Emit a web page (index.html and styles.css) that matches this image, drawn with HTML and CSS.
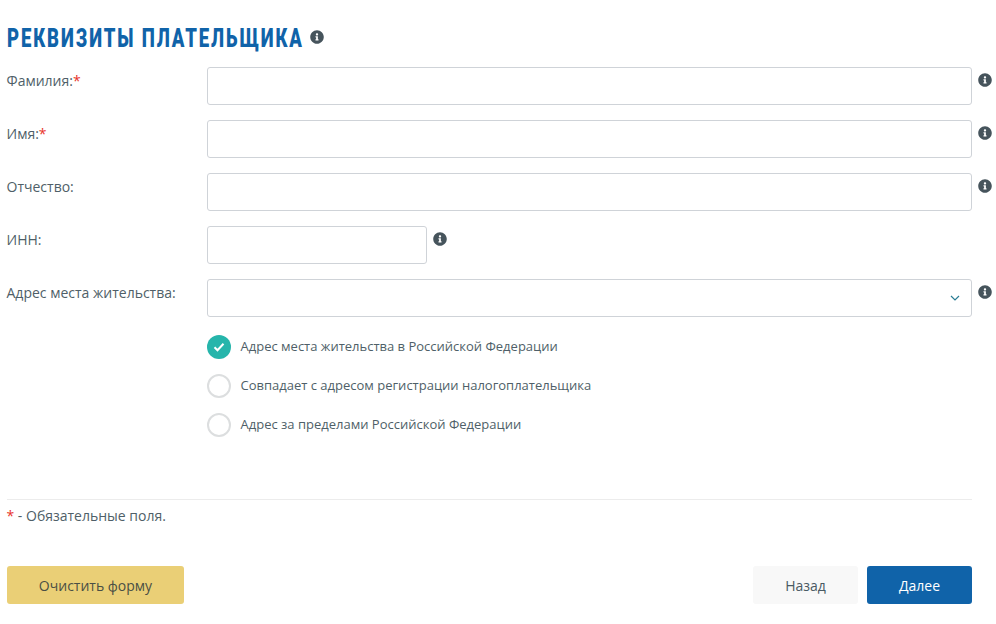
FILE: index.html
```html
<!DOCTYPE html>
<html lang="ru">

<head>
    <meta charset="UTF-8">
    <title>Реквизиты плательщика</title>
    <link rel="stylesheet" href="styles.css">
</head>

<body>
    <svg class="sprite" xmlns="http://www.w3.org/2000/svg">
        <symbol id="info" viewBox="0 0 512 512">
            <path d="M256 8C119.043 8 8 119.083 8 256c0 136.997 111.043 248 248 248s248-111.003 248-248C504 119.083 392.957 8 256 8zm0 110c23.196 0 42 18.804 42 42s-18.804 42-42 42-42-18.804-42-42 18.804-42 42-42zm56 254c0 6.627-5.373 12-12 12h-88c-6.627 0-12-5.373-12-12v-24c0-6.627 5.373-12 12-12h12v-64h-12c-6.627 0-12-5.373-12-12v-24c0-6.627 5.373-12 12-12h64c6.627 0 12 5.373 12 12v100h12c6.627 0 12 5.373 12 12v24z"/>
        </symbol>
    </svg>

    <main class="page">
        <h2 class="title"><span class="title-box"><span class="title-text">Реквизиты плательщика</span></span>
            <svg class="info"><use href="#info"></use></svg>
        </h2>

        <form class="form">
            <div class="row">
                <label class="label" for="lastName">Фамилия:<span class="req">*</span></label>
                <input class="field" type="text" id="lastName">
                <svg class="info"><use href="#info"></use></svg>
            </div>
            <div class="row">
                <label class="label" for="firstName">Имя:<span class="req">*</span></label>
                <input class="field" type="text" id="firstName">
                <svg class="info"><use href="#info"></use></svg>
            </div>
            <div class="row">
                <label class="label" for="middleName">Отчество:</label>
                <input class="field" type="text" id="middleName">
                <svg class="info"><use href="#info"></use></svg>
            </div>
            <div class="row">
                <label class="label" for="inn">ИНН:</label>
                <input class="field field-short" type="text" id="inn">
                <svg class="info"><use href="#info"></use></svg>
            </div>
            <div class="row">
                <label class="label">Адрес места жительства:</label>
                <div class="field select">
                    <svg class="chevron" viewBox="0 0 10 6"><path d="M1 1l4 4 4-4"/></svg>
                </div>
                <svg class="info"><use href="#info"></use></svg>
            </div>

            <div class="options">
                <div class="option">
                    <span class="radio radio-on">
                        <svg viewBox="0 0 12 10"><path d="M1.5 5.2l3 3 6-6.4"/></svg>
                    </span>
                    Адрес места жительства в Российской Федерации
                </div>
                <div class="option"><span class="radio"></span>Совпадает с адресом регистрации налогоплательщика</div>
                <div class="option"><span class="radio"></span>Адрес за пределами Российской Федерации</div>
            </div>
        </form>

        <p class="note"><span class="req">*</span> - Обязательные поля.</p>

        <div class="actions">
            <button type="button" class="btn btn-clear">Очистить форму</button>
            <div class="actions-right">
                <button type="button" class="btn btn-back">Назад</button>
                <button type="button" class="btn btn-next">Далее</button>
            </div>
        </div>
    </main>
</body>

</html>
```

FILE: styles.css
```css
* {
    margin: 0;
    padding: 0;
    box-sizing: border-box;
}

body {
    background: #fff;
    color: #4f5f68;
    font-family: 'Open Sans', sans-serif;
    font-size: 14px;
    line-height: 20px;
}

.sprite {
    display: none;
}

.page {
    width: 972px;
    padding: 23px 0 0 7px;
}

.title {
    display: flex;
    align-items: center;
    gap: 7px;
    height: 28px;
    margin-bottom: 16px;
}

/* no condensed face installed, so the heading is squeezed by hand */
.title-box {
    flex: none;
    width: 296px;
    height: 28px;
    padding-top: 2px;
    white-space: nowrap;
}

.title-text {
    display: inline-block;
    font-family: 'Roboto', sans-serif;
    font-size: 25px;
    line-height: 28px;
    font-weight: 900;
    letter-spacing: 2.57px;
    text-transform: uppercase;
    color: #1063a9;
    transform: scaleX(0.74);
    transform-origin: left center;
}

.info {
    flex: none;
    width: 14px;
    height: 14px;
    fill: #46545c;
}

.row {
    position: relative;
    display: flex;
    height: 38px;
    margin-bottom: 15px;
}

.label {
    flex: none;
    width: 200.5px;
    margin-left: -0.5px;
    padding-top: 4px;
}

.req {
    color: #e8342a;
}

.field {
    flex: 1;
    height: 38px;
    border: 1px solid #cfd3d8;
    border-radius: 3px;
    background: #fff;
}

.field-short {
    flex: none;
    width: 220px;
}

.select {
    display: flex;
    align-items: center;
    justify-content: flex-end;
    padding-right: 11px;
}

.chevron {
    width: 10px;
    height: 6px;
    fill: none;
    stroke: #2a7d94;
    stroke-width: 1.2;
}

.row .info {
    margin: 6px -20px 0 6px;
}

.field-short + .info {
    margin-right: 0;
}

.options {
    margin-left: 200px;
    padding-top: 2px;
}

.option {
    display: flex;
    align-items: center;
    gap: 9.5px;
    height: 24px;
    margin-bottom: 15px;
    font-size: 13px;
}

.radio {
    flex: none;
    display: flex;
    align-items: center;
    justify-content: center;
    width: 24px;
    height: 24px;
    margin-top: 2px;
    border: 2px solid #dcdedf;
    border-radius: 50%;
}

.radio-on {
    border: none;
    background: #26b5ab;
}

.radio-on svg {
    width: 12px;
    height: 10px;
    fill: none;
    stroke: #fff;
    stroke-width: 2;
}

.note {
    margin-top: 63px;
    padding: 6px 0 0 0;
    height: 67px;
    border-top: 1px solid #ececec;
    text-indent: -0.5px;
}

.actions {
    display: flex;
    justify-content: space-between;
}

.actions-right {
    display: flex;
    gap: 9px;
}

.btn {
    height: 38px;
    border: none;
    border-radius: 3px;
    font-family: 'Open Sans', sans-serif;
    font-size: 14px;
}

.btn-clear {
    width: 177px;
    background: #eacf76;
    color: #4a4f45;
}

.btn-back {
    width: 105px;
    background: #f8f8f8;
    color: #4a5a63;
}

.btn-next {
    width: 105px;
    background: #1063a9;
    color: #fff;
}
```
